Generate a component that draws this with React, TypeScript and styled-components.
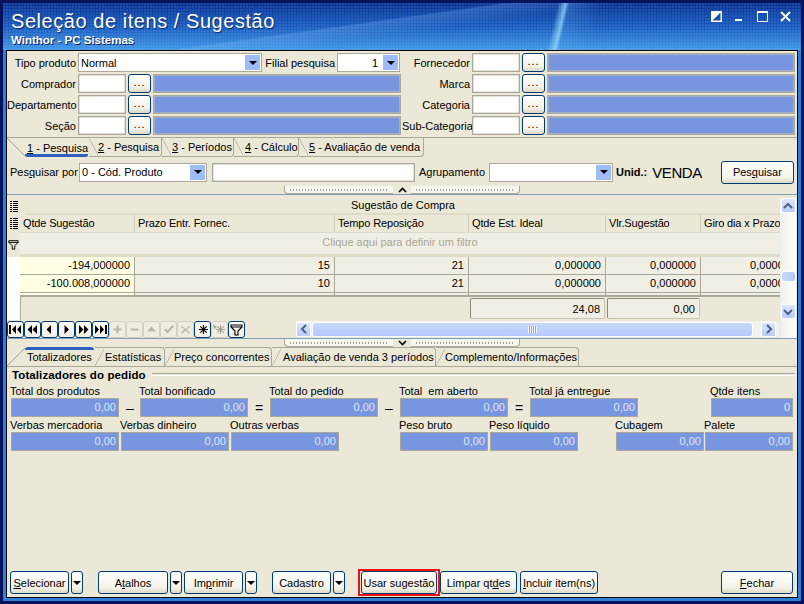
import React from "react";
import styled, { createGlobalStyle } from "styled-components";

const GlobalStyle = createGlobalStyle`
  html, body { margin: 0; padding: 0; background: #fff; }
  * { box-sizing: border-box; }
`;

const Frame = styled.div`
  width: 804px;
  height: 604px;
  border: 3px solid #06125c;
  background: #2f7fd8;
  padding: 0 3px 3px 3px;
  display: flex;
  flex-direction: column;
  overflow: hidden;
  font-family: "Liberation Sans", Arial, sans-serif;
  font-size: 11px;
  color: #000;
`;

const TitleBar = styled.div`
  height: 47px;
  flex: none;
  margin: 0 -3px;
  padding: 7px 8px 0 8px;
  display: flex;
  justify-content: space-between;
  background:
    radial-gradient(circle at 1px 1px, rgba(255, 255, 255, 0.13) 0.6px, transparent 0.9px) 0 0 / 3px 3px,
    linear-gradient(103deg, transparent 68.6%, rgba(150, 225, 255, 0.75) 69.6%, rgba(90, 170, 240, 0.25) 70%, transparent 74%),
    linear-gradient(172deg, transparent 44%, rgba(130, 190, 255, 0.25) 45%, transparent 55%),
    linear-gradient(180deg, #0a3595 0%, #1a5cc0 50%, #3f97e6 100%);
`;

const TitleText = styled.div`
  color: #fff;
  display: flex;
  flex-direction: column;
`;

const MainTitle = styled.div`
  font-size: 20px;
  line-height: 22px;
  letter-spacing: 0.55px;
  text-shadow: 1px 1px 1px #0a2a70;
`;

const SubTitle = styled.div`
  font-size: 11.5px;
  font-weight: 700;
  line-height: 14px;
  margin-top: 1px;
  text-shadow: 1px 1px 0 #0a2060;
`;

const WindowButtons = styled.div`
  display: flex;
  gap: 12px;
  align-items: flex-start;
  padding: 1px 2px 0 0;
`;

const Client = styled.div`
  flex: 1;
  min-height: 0;
  border: 1px solid #000;
  background: #ebe8d8;
  display: flex;
  flex-direction: column;
`;

const FormArea = styled.div`
  display: flex;
  padding-top: 2px;
`;

const FormColumn = styled.div`
  display: flex;
  flex-direction: column;
  gap: 2px;
  width: ${(p: { $width: number }) => p.$width}px;
`;

const FormRow = styled.div`
  display: flex;
  align-items: center;
  height: 19px;
`;

const Label = styled.div<{ $width?: number; $align?: string; $gap?: number }>`
  width: ${(p) => (p.$width ? `${p.$width}px` : "auto")};
  text-align: ${(p) => p.$align || "right"};
  margin-right: ${(p) => p.$gap ?? 2}px;
  flex: none;
  white-space: nowrap;
`;

const TextBox = styled.div<{ $width: number; $height?: number; $left?: number }>`
  width: ${(p) => p.$width}px;
  height: ${(p) => p.$height ?? 19}px;
  margin-left: ${(p) => p.$left ?? 0}px;
  flex: none;
  background: #fff;
  border: 1px solid #aca899;
  box-shadow: inset 0 0 0 0.5px #c8c5b6;
`;

const BlueBox = styled(TextBox)`
  background: #7896df;
  margin-left: 2px;
`;

const EllipsisButton = styled.button`
  width: 23px;
  height: 19px;
  margin-left: 2px;
  flex: none;
  padding: 0 0 4px;
  font: inherit;
  letter-spacing: 1px;
  border: 1px solid #003c74;
  border-radius: 3px;
  background: linear-gradient(#fff, #f4f2e8 70%, #dcd8c6);
`;

const SelectBox = styled.div<{ $width: number }>`
  width: ${(p) => p.$width}px;
  height: 19px;
  flex: none;
  display: flex;
  align-items: center;
  background: #fff;
  border: 1px solid #aca899;
  padding: 0 0 0 2px;
`;

const SelectValue = styled.div<{ $right?: boolean }>`
  flex: 1;
  text-align: ${(p) => (p.$right ? "right" : "left")};
  padding-right: ${(p) => (p.$right ? 5 : 0)}px;
  white-space: nowrap;
`;

const SelectArrow = styled.div`
  width: 15px;
  height: 15px;
  margin-right: 1px;
  flex: none;
  background: #9ebcf6;
  display: flex;
  align-items: center;
  justify-content: center;
  &::after {
    content: "";
    border-left: 4px solid transparent;
    border-right: 4px solid transparent;
    border-top: 4px solid #000;
  }
`;

const TabStrip = styled.div<{ $upright?: boolean }>`
  display: flex;
  height: 20px;
  flex: none;
  ${(p) => (p.$upright ? "border-bottom: 1px solid #aca899;" : "margin-top: 2px; border-top: 1px solid #aca899;")}
`;

const Tab = styled.div<{ $width: number; $pad: number; $upright?: boolean; $active?: boolean }>`
  position: relative;
  width: ${(p) => p.$width}px;
  padding-left: ${(p) => p.$pad}px;
  flex: none;
  display: flex;
  align-items: center;
  white-space: nowrap;
  border-right: 1px solid #aca899;
  ${(p) =>
    p.$upright
      ? `border-top: ${p.$active ? "0" : "1px solid #aca899"}; border-top-right-radius: 4px;`
      : `border-bottom: ${p.$active ? "0" : "1px solid #aca899"}; border-bottom-right-radius: 4px;`}
  ${(p) => p.$active && "border-right-color: transparent;"}
  &::before {
    content: "";
    position: absolute;
    left: 0;
    ${(p) => (p.$upright ? "bottom: 0;" : "top: 0;")}
    width: ${(p) => (p.$active ? 18 : 9)}px;
    height: ${(p) => (p.$active ? 18 : 17)}px;
    background: linear-gradient(
      ${(p) => (p.$upright ? "to bottom right" : "to top right")},
      transparent calc(50% - 0.6px),
      #aca899 50%,
      transparent calc(50% + 0.6px)
    );
  }
  ${(p) =>
    p.$active &&
    `&::after {
      content: "";
      position: absolute;
      left: 18px;
      right: 0;
      height: 3px;
      background: #2c62bd;
      ${p.$upright ? "top: 0; border-radius: 3px 3px 0 0;" : "bottom: 0; border-radius: 0 0 2px 2px;"}
    }`}
`;

const SearchRow = styled.div`
  display: flex;
  align-items: center;
  height: 24px;
  margin-top: 3px;
  padding-left: 3px;
`;

const BoldLabel = styled.div`
  font-weight: 700;
  margin-left: 3px;
`;

const UnitValue = styled.div`
  font-size: 15px;
  margin-left: 5px;
  letter-spacing: -0.4px;
`;

const PushButton = styled.button<{ $width: number; $left?: number; $height?: number }>`
  width: ${(p) => p.$width}px;
  height: ${(p) => p.$height ?? 23}px;
  margin-left: ${(p) => p.$left ?? 0}px;
  flex: none;
  padding: 0;
  font: inherit;
  color: #000;
  border: 1px solid #003c74;
  border-radius: 3px;
  background: linear-gradient(#fff, #f4f2e8 75%, #dcd8c6);
  white-space: nowrap;
`;

const DropButton = styled(PushButton)`
  display: flex;
  align-items: center;
  justify-content: center;
  &::after {
    content: "";
    border-left: 4px solid transparent;
    border-right: 4px solid transparent;
    border-top: 4px solid #000;
  }
`;

const MarkedBox = styled.div`
  flex: none;
  display: flex;
  margin: -2px -3px -2px 13px;
  padding: 0 1px;
  border: 2px solid #ee1111;
`;

const Splitter = styled.div<{ $top?: number }>`
  width: 236px;
  height: 8px;
  margin: ${(p) => p.$top ?? 0}px 0 0 277px;
  flex: none;
  display: flex;
  align-items: center;
  border: 1px solid #aca899;
  border-top: 0;
  border-radius: 0 0 4px 4px;
  background: #f6f5ee;
`;

const SplitterDots = styled.div`
  flex: 1;
  height: 2px;
  margin: 0 4px;
  background: radial-gradient(circle, #a5a292 0.8px, transparent 1px) 0 0 / 3px 2px;
`;

const SplitterArrow = styled.div`
  width: 18px;
  height: 8px;
  flex: none;
  display: flex;
  justify-content: center;
  align-items: center;
  background: #ebe8d8;
`;

const GridPanel = styled.div`
  height: 145px;
  flex: none;
  display: flex;
  border-top: 1px solid #7f9db9;
  border-bottom: 1px solid #7f9db9;
  padding-top: 3px;
`;

const GridMain = styled.div`
  width: 773px;
  flex: none;
  display: flex;
  flex-direction: column;
  overflow: hidden;
`;

const GridRow = styled.div<{ $height: number; $bg?: string }>`
  height: ${(p) => p.$height}px;
  flex: none;
  display: flex;
  background: ${(p) => p.$bg || "transparent"};
`;

const StubCell = styled.div<{ $white?: boolean }>`
  width: 13px;
  flex: none;
  display: flex;
  align-items: center;
  justify-content: center;
  background: ${(p) => (p.$white ? "#fff" : "transparent")};
`;

const GroupHeader = styled.div`
  flex: 1;
  text-align: center;
  line-height: 15px;
  margin-left: 6px;
  border-bottom: 2px solid #dedbca;
`;

const HeaderCell = styled.div<{ $width: number }>`
  width: ${(p) => p.$width}px;
  flex: none;
  padding-left: 3px;
  line-height: 17px;
  letter-spacing: -0.15px;
  white-space: nowrap;
  overflow: hidden;
  border-right: 1px solid #cfccbb;
`;

const FilterCell = styled.div`
  flex: 1;
  text-align: center;
  line-height: 18px;
  color: #a9a697;
  background: #f1efe3;
  border-top: 1px solid #dedbca;
  border-bottom: 3px solid #dedbca;
`;

const DataCell = styled.div<{ $width: number; $bg?: string }>`
  width: ${(p) => p.$width}px;
  flex: none;
  text-align: right;
  padding-right: 4px;
  line-height: 17px;
  white-space: nowrap;
  background: ${(p) => p.$bg || "#f1efe3"};
  border-right: 1px solid #aca899;
  border-bottom: 1px solid #aca899;
`;

const FooterArea = styled.div`
  flex: 1;
  display: flex;
  justify-content: flex-start;
  align-items: flex-start;
  border-left: 1px solid #aca899;
  border-top: 1px solid #aca899;
  padding: 1px 0 0 449px;
  gap: 2px;
`;

const FooterCell = styled.div<{ $width: number }>`
  width: ${(p) => p.$width}px;
  height: 21px;
  flex: none;
  text-align: right;
  padding-right: 4px;
  line-height: 20px;
  background: #f1efe3;
  border: 1px solid #c6c3b2;
  border-left-color: #8d8b7c;
  border-top-color: #8d8b7c;
  border-radius: 2px;
`;

const NavRow = styled.div`
  height: 18px;
  flex: none;
  display: flex;
  align-items: center;
`;

const NavButton = styled.div<{ $on?: boolean }>`
  width: 17px;
  height: 17px;
  flex: none;
  display: flex;
  align-items: center;
  justify-content: center;
  border: 1px solid ${(p) => (p.$on ? "#003c74" : "#d4d1c0")};
  border-radius: 3px;
  background: ${(p) => (p.$on ? "linear-gradient(#fff, #f1efe3)" : "#efede0")};
`;

const HScroll = styled.div`
  width: 483px;
  height: 16px;
  margin-left: 51px;
  flex: none;
  display: flex;
  align-items: center;
  background: #f3f3ee;
`;

const ScrollArrow = styled.div`
  width: 15px;
  height: 15px;
  flex: none;
  display: flex;
  align-items: center;
  justify-content: center;
  border-radius: 2px;
  background: linear-gradient(#dbe6fd, #b8ccf8);
  border: 1px solid #fff;
`;

const HThumb = styled.div`
  width: 441px;
  height: 15px;
  margin: 0 8px 0 1px;
  flex: none;
  display: flex;
  align-items: center;
  justify-content: center;
  border: 1px solid #fff;
  border-radius: 3px;
  background: linear-gradient(#c9d9fc, #b3c9f9);
`;

const Grip = styled.div`
  width: 9px;
  height: 7px;
  background: repeating-linear-gradient(90deg, #eef3ff 0 1px, #8fa9e0 1px 2px);
`;

const VScroll = styled.div`
  width: 16px;
  flex: none;
  display: flex;
  flex-direction: column;
  align-items: center;
  padding: 0 0 18px;
  background: linear-gradient(90deg, #f0f0ea, #fff);
`;

const VThumb = styled.div`
  width: 15px;
  height: 11px;
  margin: 58px 0 22px;
  flex: none;
  border: 1px solid #fff;
  border-radius: 3px;
  background: linear-gradient(90deg, #c9d9fc, #b3c9f9);
`;

const GroupTitleRow = styled.div`
  display: flex;
  align-items: center;
  height: 15px;
  padding: 0 2px 0 5px;
`;

const GroupTitle = styled.div`
  font-weight: 700;
  font-size: 11.5px;
  white-space: nowrap;
  letter-spacing: 0.1px;
`;

const GroupRule = styled.div`
  flex: 1;
  height: 3px;
  margin-left: 6px;
  border-top: 1px solid #aca899;
  border-bottom: 1px solid #fff;
`;

const TotalsRow = styled.div<{ $top: number }>`
  display: flex;
  align-items: flex-end;
  padding-left: 4px;
  margin-top: ${(p) => p.$top}px;
`;

const Field = styled.div<{ $width: number; $after: number }>`
  width: ${(p) => p.$width}px;
  margin-right: ${(p) => p.$after}px;
  flex: none;
  position: relative;
`;

const FieldLabel = styled.div`
  height: 13px;
  line-height: 13px;
  margin-left: -1px;
  white-space: pre;
`;

const FieldValue = styled.div`
  height: 19px;
  line-height: 17px;
  text-align: right;
  padding-right: 2px;
  color: #dfe6f8;
  background: #7896df;
  border: 1px solid #aca899;
`;

const Operator = styled.div`
  position: absolute;
  bottom: 0;
  left: 100%;
  width: 22px;
  line-height: 18px;
  font-size: 14px;
  text-align: center;
`;

const ActionBar = styled.div`
  margin-top: auto;
  height: 23px;
  margin-bottom: 3px;
  display: flex;
  align-items: center;
  padding-left: 3px;
`;

const glyph = (d: string, color = "#000") => (
  <svg width="13" height="11" viewBox="0 0 13 11">
    <path d={d} fill={color} />
  </svg>
);

const navIcons: { d: string; on: boolean }[] = [
  { d: "M0 1h2v9H0zM7 1v9L3 5.5zM12 1v9L8 5.5z", on: true },
  { d: "M6 1v9L1.5 5.5zM11 1v9L6.5 5.5z", on: true },
  { d: "M8 1v9L3.5 5.5z", on: true },
  { d: "M4.5 1v9L9 5.5z", on: true },
  { d: "M2 1v9L6.5 5.5zM7 1v9l4.5-4.5z", on: true },
  { d: "M1 1v9l4-4.5zM6 1v9l4-4.5zM11 1h2v9h-2z", on: true },
  { d: "M5.5 1.5h2v3h3v2h-3v3h-2v-3h-3v-2h3z", on: false },
  { d: "M2.5 4.5h8v2h-8z", on: false },
  { d: "M6.5 2.5l4.5 5H2z", on: false },
  { d: "M2 6l2-1.5 1.5 2L10.5 1 12 2.5 5.5 9.5z", on: false },
  { d: "M3 2l3.5 3L10 2l1 1-3.5 2.5L11 8.5l-1 1-3.5-3-3.5 3-1-1 3.5-3L2 3z", on: false },
];

const Asterisk = ({ color, tail }: { color: string; tail?: boolean }) => (
  <svg width="13" height="13" viewBox="0 0 13 13">
    <path d="M7.5 2v9M3 6.5h9M4.3 3.3l6.4 6.4M10.7 3.3l-6.4 6.4" stroke={color} strokeWidth="1.2" fill="none" />
    {tail && <path d="M0 1l4 3-3 2z" fill={color} />}
  </svg>
);

const FilterIcon = ({ size = 13 }: { size?: number }) => (
  <svg width={size} height={size} viewBox="0 0 13 13">
    <path d="M1 2h11v2L8 8v4H5V8L1 4zM1 4h11" stroke="#000" strokeWidth="1.1" fill="none" />
  </svg>
);

const ListIcon = () => (
  <svg width="8" height="11" viewBox="0 0 8 11">
    <path d="M0 .5h2M0 2.5h2M0 4.5h2M0 6.5h2M0 8.5h2M0 10.5h2M3 .5h5M3 2.5h5M3 4.5h5M3 6.5h5M3 8.5h5M3 10.5h5" stroke="#000" strokeWidth="1" />
  </svg>
);

const SmallChevron = ({ up }: { up: boolean }) => (
  <svg width="9" height="6" viewBox="0 0 9 6">
    <path d={up ? "M1 5l3.5-3.5L8 5" : "M1 1l3.5 3.5L8 1"} stroke="#000" strokeWidth="1.6" fill="none" />
  </svg>
);

const ScrollChevron = ({ dir }: { dir: "up" | "down" | "left" | "right" }) => {
  const paths = {
    up: "M2 8l4-4 4 4",
    down: "M2 4l4 4 4-4",
    left: "M8 2L4 6l4 4",
    right: "M4 2l4 4-4 4",
  };
  return (
    <svg width="12" height="12" viewBox="0 0 12 12">
      <path d={paths[dir]} stroke="#4d6185" strokeWidth="2" fill="none" />
    </svg>
  );
};

const leftLookups = ["Comprador", "Departamento", "Seção"];
const rightLookups = ["Fornecedor", "Marca", "Categoria", "Sub-Categoria"];
const columnWidths = [115, 200, 134, 137, 95, 100];
const headers = ["Qtde Sugestão", "Prazo Entr. Fornec.", "Tempo Reposição", "Qtde Est. Ideal", "Vlr.Sugestão", "Giro dia x Prazo"];
const rows = [
  ["-194,000000", "15", "21", "0,000000", "0,000000", "0,000000"],
  ["-100.008,000000", "10", "21", "0,000000", "0,000000", "0,000000"],
  ["", "", "", "", "", ""],
];

type Total = { label: string; width: number; after: number; value?: string; op?: string };

const totalsTop: Total[] = [
  { label: "Total dos produtos", width: 108, after: 21, op: "–" },
  { label: "Total bonificado", width: 108, after: 22, op: "=" },
  { label: "Total do pedido", width: 108, after: 22, op: "–" },
  { label: "Total  em aberto", width: 108, after: 22, op: "=" },
  { label: "Total já entregue", width: 108, after: 73 },
  { label: "Qtde itens", width: 82, after: 0, value: "0" },
];

const totalsBottom: Total[] = [
  { label: "Verbas mercadoria", width: 108, after: 2 },
  { label: "Verbas dinheiro", width: 108, after: 2 },
  { label: "Outras verbas", width: 108, after: 61 },
  { label: "Peso bruto", width: 88, after: 2 },
  { label: "Peso líquido", width: 88, after: 38 },
  { label: "Cubagem", width: 88, after: 1 },
  { label: "Palete", width: 88, after: 0 },
];

const TotalField = ({ label, width, after, value, op }: Total) => (
  <Field $width={width} $after={after}>
    <FieldLabel>{label}</FieldLabel>
    <FieldValue>{value ?? "0,00"}</FieldValue>
    {op && <Operator>{op}</Operator>}
  </Field>
);

const Lookup = ({ label, labelWidth }: { label: string; labelWidth: number }) => (
  <FormRow>
    <Label $width={labelWidth}>{label}</Label>
    <TextBox $width={48} />
    <EllipsisButton>...</EllipsisButton>
    <BlueBox $width={248} />
  </FormRow>
);

const App: React.FC = () => {
  return (
    <Frame>
      <GlobalStyle />
      <TitleBar>
        <TitleText>
          <MainTitle>Seleção de itens / Sugestão</MainTitle>
          <SubTitle>Winthor - PC Sistemas</SubTitle>
        </TitleText>
        <WindowButtons>
          <svg width="11" height="11" viewBox="0 0 11 11">
            <path d="M0 0h11v11H0z" fill="#fff" />
            <path d="M9.5 1.5v8h-8z" fill="#1b4fa8" />
          </svg>
          <svg width="11" height="11" viewBox="0 0 11 11">
            <path d="M1 8h7v2H1z" fill="#fff" />
          </svg>
          <svg width="11" height="11" viewBox="0 0 11 11">
            <path d="M.5 1.5h10v9H.5z" fill="none" stroke="#fff" />
            <path d="M0 0h11v2H0z" fill="#fff" />
          </svg>
          <svg width="11" height="11" viewBox="0 0 11 11">
            <path d="M1 1l9 9M10 1l-9 9" stroke="#fff" strokeWidth="2" />
          </svg>
        </WindowButtons>
      </TitleBar>
      <Client>
        <FormArea>
          <FormColumn $width={395}>
            <FormRow>
              <Label $width={69}>Tipo produto</Label>
              <SelectBox $width={184}>
                <SelectValue>Normal</SelectValue>
                <SelectArrow />
              </SelectBox>
              <Label $width={73}>Filial pesquisa</Label>
              <SelectBox $width={63}>
                <SelectValue $right>1</SelectValue>
                <SelectArrow />
              </SelectBox>
            </FormRow>
            {leftLookups.map((label) => (
              <Lookup key={label} label={label} labelWidth={69} />
            ))}
          </FormColumn>
          <FormColumn $width={395}>
            {rightLookups.map((label) => (
              <Lookup key={label} label={label} labelWidth={68} />
            ))}
          </FormColumn>
        </FormArea>
        <TabStrip>
          <Tab $width={82} $pad={20} $active><span><u>1</u> - Pesquisa</span></Tab>
          <Tab $width={73} $pad={9}><span><u>2</u> - Pesquisa</span></Tab>
          <Tab $width={72} $pad={10}><span><u>3</u> - Períodos</span></Tab>
          <Tab $width={65} $pad={11}><span><u>4</u> - Cálculo</span></Tab>
          <Tab $width={125} $pad={10}><span><u>5</u> - Avaliação de venda</span></Tab>
        </TabStrip>
        <SearchRow>
          <Label $width={66} $align="left" $gap={3}>Pes<u>q</u>uisar por</Label>
          <SelectBox $width={128}>
            <SelectValue>0 - Cód. Produto</SelectValue>
            <SelectArrow />
          </SelectBox>
          <TextBox $width={203} $left={5} />
          <Label $width={70} $gap={4}>Agrupamento</Label>
          <SelectBox $width={124}>
            <SelectValue />
            <SelectArrow />
          </SelectBox>
          <BoldLabel>Unid.:</BoldLabel>
          <UnitValue>VENDA</UnitValue>
          <PushButton $width={73} $left={19}>Pes<u>q</u>uisar</PushButton>
        </SearchRow>
        <Splitter $top={2}>
          <SplitterDots />
          <SplitterArrow><SmallChevron up /></SplitterArrow>
          <SplitterDots />
        </Splitter>
        <GridPanel>
          <GridMain>
            <GridRow $height={17} $bg="#ebe8d8">
              <StubCell><ListIcon /></StubCell>
              <GroupHeader>Sugestão de Compra</GroupHeader>
            </GridRow>
            <GridRow $height={17} $bg="#ebe8d8">
              <StubCell><ListIcon /></StubCell>
              {headers.map((h, i) => (
                <HeaderCell key={h} $width={columnWidths[i]}>{h}</HeaderCell>
              ))}
            </GridRow>
            <GridRow $height={25}>
              <StubCell><FilterIcon size={11} /></StubCell>
              <FilterCell>Clique aqui para definir um filtro</FilterCell>
            </GridRow>
            {rows.map((row, r) => (
              <GridRow key={r} $height={r === 2 ? 3 : 18}>
                <StubCell $white />
                {row.map((v, i) => (
                  <DataCell key={i} $width={columnWidths[i]} $bg={i === 0 ? "#ffffe4" : undefined}>{v}</DataCell>
                ))}
              </GridRow>
            ))}
            <GridRow $height={24}>
              <StubCell $white />
              <FooterArea>
                <FooterCell $width={135}>24,08</FooterCell>
                <FooterCell $width={93}>0,00</FooterCell>
              </FooterArea>
            </GridRow>
            <NavRow>
              {navIcons.map((icon) => (
                <NavButton key={icon.d} $on={icon.on}>
                  {glyph(icon.d, icon.on ? "#000" : "#b8b5a6")}
                </NavButton>
              ))}
              <NavButton $on><Asterisk color="#000" /></NavButton>
              <NavButton><Asterisk color="#a8a597" tail /></NavButton>
              <NavButton $on><FilterIcon /></NavButton>
              <HScroll>
                <ScrollArrow><ScrollChevron dir="left" /></ScrollArrow>
                <HThumb><Grip /></HThumb>
                <ScrollArrow><ScrollChevron dir="right" /></ScrollArrow>
              </HScroll>
            </NavRow>
          </GridMain>
          <VScroll>
            <ScrollArrow><ScrollChevron dir="up" /></ScrollArrow>
            <VThumb />
            <ScrollArrow><ScrollChevron dir="down" /></ScrollArrow>
          </VScroll>
        </GridPanel>
        <Splitter $top={0}>
          <SplitterDots />
          <SplitterArrow><SmallChevron up={false} /></SplitterArrow>
          <SplitterDots />
        </Splitter>
        <TabStrip $upright>
          <Tab $width={88} $pad={20} $upright $active>Totalizadores</Tab>
          <Tab $width={70} $pad={10} $upright>Estatísticas</Tab>
          <Tab $width={107} $pad={9} $upright>Preço concorrentes</Tab>
          <Tab $width={164} $pad={11} $upright>Avaliação de venda 3 períodos</Tab>
          <Tab $width={143} $pad={9} $upright>Complemento/Informações</Tab>
        </TabStrip>
        <GroupTitleRow>
          <GroupTitle>Totalizadores do pedido</GroupTitle>
          <GroupRule />
        </GroupTitleRow>
        <TotalsRow $top={3}>
          {totalsTop.map((t) => (
            <TotalField key={t.label} {...t} />
          ))}
        </TotalsRow>
        <TotalsRow $top={2}>
          {totalsBottom.map((t) => (
            <TotalField key={t.label} {...t} />
          ))}
        </TotalsRow>
        <ActionBar>
          <PushButton $width={59}><u>S</u>elecionar</PushButton>
          <DropButton $width={12} $left={2} />
          <PushButton $width={70} $left={15}>A<u>t</u>alhos</PushButton>
          <DropButton $width={12} $left={2} />
          <PushButton $width={59} $left={2}>Im<u>p</u>rimir</PushButton>
          <DropButton $width={12} $left={2} />
          <PushButton $width={59} $left={15}>Cadastro</PushButton>
          <DropButton $width={12} $left={2} />
          <MarkedBox>
            <PushButton $width={76}>Usar sugestão</PushButton>
          </MarkedBox>
          <PushButton $width={77} $left={3}>Limpar qt<u>d</u>es</PushButton>
          <PushButton $width={78} $left={3}><u>I</u>ncluir item(ns)</PushButton>
          <PushButton $width={72} $left={123}><u>F</u>echar</PushButton>
        </ActionBar>
      </Client>
    </Frame>
  );
};

export default App;
